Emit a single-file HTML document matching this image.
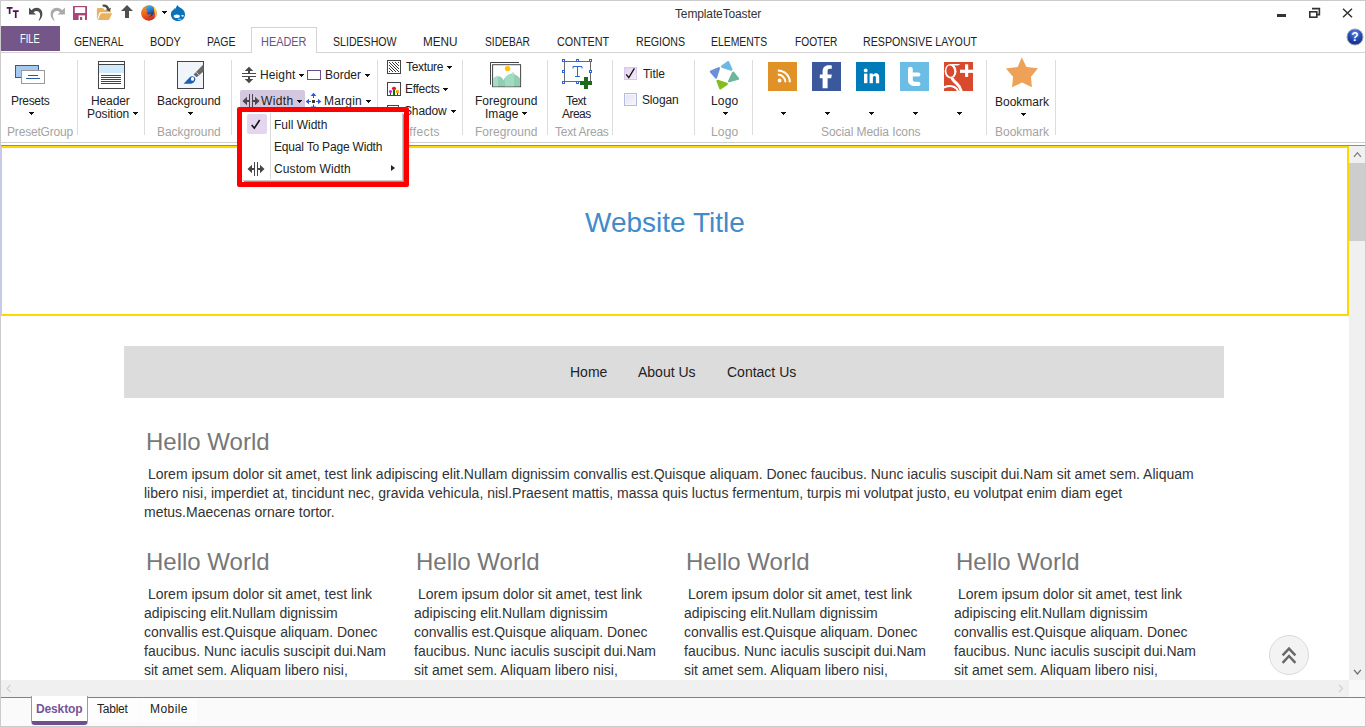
<!DOCTYPE html>
<html><head><meta charset="utf-8">
<style>
*{margin:0;padding:0;box-sizing:border-box}
html,body{width:1366px;height:727px;overflow:hidden;background:#fff}
body{font-family:"Liberation Sans",sans-serif;position:relative}
.a{position:absolute}
.t{position:absolute;height:20px;line-height:20px;white-space:nowrap;font-size:12px}
.sep{position:absolute;top:60px;height:75px;width:1px;background:#dcdcdc}
.arr{position:absolute;width:5px;height:3px;background:#111;clip-path:polygon(0 0,5px 0,5px 1px,4px 1px,4px 2px,3px 2px,3px 3px,2px 3px,2px 2px,1px 2px,1px 1px,0 1px)}
.c{font-size:14px;line-height:19px;color:#333;position:absolute}
.h{position:absolute;font-size:24px;line-height:28px;color:#777}
</style></head><body>
<!-- window frame -->
<div class="a" style="left:0;top:0;width:1366px;height:727px;border:1px solid #cbcbcb"></div>

<!-- tab strip -->
<div class="a" style="left:1px;top:52px;width:1364px;height:1px;background:#d4d4d4"></div>
<div class="a" style="left:1px;top:26px;width:59px;height:25px;background:#745788"></div>
<div class="a" style="left:251px;top:27px;width:66px;height:26px;background:#fff;border:1px solid #d4d4d4;border-bottom:none"></div>

<!-- ribbon bottom -->
<div class="a" style="left:1px;top:142px;width:1364px;height:1px;background:#d0d0d0"></div>

<!-- group separators -->
<div class="sep" style="left:77px"></div>
<div class="sep" style="left:144px"></div>
<div class="sep" style="left:231px"></div>
<div class="sep" style="left:377px"></div>
<div class="sep" style="left:462px"></div>
<div class="sep" style="left:547px"></div>
<div class="sep" style="left:612px"></div>
<div class="sep" style="left:694px"></div>
<div class="sep" style="left:752px"></div>
<div class="sep" style="left:986px"></div>
<div class="sep" style="left:1055px"></div>

<!-- width button highlight -->
<div class="a" style="left:240px;top:90px;width:65px;height:20px;background:#d5c7df;border-radius:2px"></div>

<!-- title bar icons -->
<svg class="a" style="left:6px;top:6px" width="14" height="14" viewBox="0 0 14 14"><g fill="#52124e"><path d="M0.7 1.1h5.9v1.7H4.5v5.2H2.8V2.8H0.7z"/><path d="M6.8 4.2h5.9v1.7h-2.1v6h-1.7v-6H6.8z"/></g></svg>
<svg class="a" style="left:28px;top:5px" width="16" height="17" viewBox="0 0 16 17"><path d="M1 2.6 L1 9.6 L8 9.6 L5.6 7.2 C7.6 5.3 10.6 5.6 11.7 8 C12.6 10 12.2 12.6 10.6 15.6 L11.6 15.6 C14.4 12.6 15.2 8.6 13.6 5.6 C11.6 2.2 7 1.6 3.6 5.2 Z" fill="#4d4d4d"/></svg>
<svg class="a" style="left:50px;top:5px" width="16" height="17" viewBox="0 0 16 17"><path transform="translate(16,0) scale(-1.070,1)" d="M1 2.6 L1 9.6 L8 9.6 L5.6 7.2 C7.6 5.3 10.6 5.6 11.7 8 C12.6 10 12.2 12.6 10.6 15.6 L11.6 15.6 C14.4 12.6 15.2 8.6 13.6 5.6 C11.6 2.2 7 1.6 3.6 5.2 Z" fill="#ababab"/></svg>
<svg class="a" style="left:73px;top:6px" width="14" height="14" viewBox="0 0 14 14"><rect x="0" y="0" width="14" height="14" fill="#a8467c"/><rect x="1.8" y="1.2" width="10.4" height="5.8" fill="#fff"/><rect x="5.6" y="9.4" width="6.4" height="4.6" fill="#fff"/><rect x="7" y="11" width="2.2" height="3" fill="#a8467c"/></svg>
<svg class="a" style="left:96px;top:4px" width="18" height="17" viewBox="0 0 18 17"><path d="M0.900 15.400 V5.200 Q0.900 3.900 2.200 3.900 H6.400 Q7.100 3.900 7.500 4.600 L8.300 5.900 H13.800 Q15 5.900 15 7.100 V8.200 H4.600 Q3.500 8.200 3.100 9.300 L1.200 15.600 Z" fill="#ebb15f"/><path d="M5.700 9.200 H16.200 L13.400 15.200 Q13.100 15.900 12.300 15.900 H2 L4.500 10 Q4.800 9.200 5.700 9.200 Z" fill="#ebb15f"/><path d="M6.600 1.800 C9.400 1 11.400 2.600 12.300 5" fill="none" stroke="#4a4a4a" stroke-width="2.200"/><path d="M9.700 5.700 L15 3.800 L13.700 7.600 Z" fill="#4a4a4a"/></svg>
<svg class="a" style="left:121px;top:5px" width="12" height="14" viewBox="0 0 12 14"><path d="M6 0 L12 6 H8 V13 H4 V6 H0 Z" fill="#505050"/></svg>
<svg class="a" style="left:141px;top:5px" width="16" height="16" viewBox="0 0 16 16"><defs><linearGradient id="ffg" x1="0.3" y1="0" x2="0.6" y2="1"><stop offset="0" stop-color="#3cc0f0"/><stop offset="0.5" stop-color="#1f78d0"/><stop offset="1" stop-color="#14246e"/></linearGradient><linearGradient id="ffo" x1="0.2" y1="0" x2="0.5" y2="1"><stop offset="0" stop-color="#f7921e"/><stop offset="0.55" stop-color="#ee5d1a"/><stop offset="1" stop-color="#cf2a1c"/></linearGradient><linearGradient id="ffy" x1="0" y1="0" x2="0" y2="1"><stop offset="0" stop-color="#fde64a"/><stop offset="0.6" stop-color="#fbc21e"/><stop offset="1" stop-color="#f08a1c"/></linearGradient></defs><circle cx="8" cy="7.900" r="7.700" fill="url(#ffo)"/><path d="M12.300 1.500 C14.600 3.200 15.900 6 15.600 8.800 C15.300 11 14.300 12.800 12.800 14 C13.800 12 14 9.600 13.600 7.400 C13.300 5.200 13 3.400 12.300 1.500 Z" fill="url(#ffy)"/><ellipse cx="8.500" cy="5.900" rx="4.600" ry="5.700" fill="url(#ffg)"/><path d="M0.500 6.200 C1.300 3.800 2.900 2.300 4.300 1.900 C3.700 2.900 4.500 3.300 5.700 3.200 C5 3.900 4.700 4.600 5.400 5.200 C6 5.500 6.800 5.400 7.200 5.600 C6.400 6.200 5.600 6.800 5.700 7.800 C5.800 9 7 9.700 8.300 9.600 C9.200 9.500 10 9.300 10.600 9 C10.300 10.500 8.800 11.600 7 11.400 C8.600 12.600 11 12.300 12.400 10.600 C13.300 9.500 13.500 8 13.400 6.600 C14.400 8.600 14.200 11.600 12 13.800 C9.400 16.200 5.200 16.200 2.600 13.600 C0.600 11.600 0 8.800 0.500 6.200 Z" fill="url(#ffo)"/></svg>
<svg class="a" style="left:170px;top:4px" width="16" height="18" viewBox="0 0 16 18"><path d="M7.400 0.900 C8.400 2.600 9.800 3.400 11.600 4.600 C13.800 6.100 15 8 15 10.600 C15 14.400 12 17.100 8 17.100 C4 17.100 0.900 14.400 0.900 10.600 C0.900 8.600 1.600 7.200 2.400 6.300 L2.800 7.200 L3.200 5.300 L4 6 L4.600 4 L5.600 4.800 L6.200 3 Z" fill="#0a72ba"/><ellipse cx="6.800" cy="12.200" rx="3.100" ry="1.800" fill="#fff"/><path d="M11.400 11.300 C12.200 10.800 13.400 10.900 14 11.800 C13.400 12.800 12.200 12.900 11.600 12.300 Z" fill="#fff"/><path d="M7.200 15.200 C8.800 14.300 10.400 14.400 11.800 15.400 C10.400 16.400 8.600 16.300 7.200 15.200 Z" fill="#7fc0e6"/></svg>

<!-- window controls -->
<div class="a" style="left:1277px;top:14px;width:9px;height:3px;background:#333"></div>
<svg class="a" style="left:1308px;top:7px" width="13" height="12" viewBox="0 0 13 12"><path d="M4 1.6 H11.4 V7.6 H9" fill="none" stroke="#333" stroke-width="1.6"/><rect x="1.8" y="4.8" width="7" height="5.4" fill="#fff" stroke="#333" stroke-width="1.6"/></svg>
<svg class="a" style="left:1341px;top:8px" width="13" height="10" viewBox="0 0 13 10"><path d="M2 0.8 L11 9.2 M11 0.8 L2 9.2" stroke="#333" stroke-width="1.5"/></svg>
<svg class="a" style="left:1346px;top:28px" width="18" height="18" viewBox="0 0 18 18"><defs><radialGradient id="hg" cx="0.5" cy="0.25" r="0.8"><stop offset="0" stop-color="#5f86e0"/><stop offset="0.5" stop-color="#2549b4"/><stop offset="1" stop-color="#14287a"/></radialGradient></defs><circle cx="9" cy="9" r="8" fill="url(#hg)" stroke="#9aa3b8" stroke-width="1"/><text x="9" y="13.2" text-anchor="middle" font-family="Liberation Sans" font-weight="700" font-size="12" fill="#fff">?</text></svg>

<!-- presets -->
<svg class="a" style="left:14px;top:64px" width="32" height="21" viewBox="0 0 32 21"><rect x="1.5" y="1.5" width="23" height="12" fill="#a7c9ee" stroke="#2a5d9e" stroke-width="1"/><rect x="7.5" y="6.5" width="23" height="13" fill="#fff" stroke="#9a9a9a" stroke-width="1"/><rect x="14" y="11" width="10" height="1" fill="#2a5d9e"/><rect x="12" y="14" width="14" height="1" fill="#2a5d9e"/></svg>
<!-- header position -->
<svg class="a" style="left:97px;top:60px" width="29" height="30" viewBox="0 0 29 30"><rect x="1.5" y="1.5" width="26" height="27" fill="#fff" stroke="#444" stroke-width="1"/><rect x="2" y="5" width="25" height="8" fill="#cfe9fd"/><rect x="1.5" y="4" width="26" height="1" fill="#444"/><g fill="#444"><rect x="4" y="15" width="20" height="1"/><rect x="4" y="17" width="20" height="1"/><rect x="4" y="19" width="20" height="1"/><rect x="4" y="21" width="20" height="1"/><rect x="4" y="23" width="20" height="1"/></g></svg>
<!-- background -->
<svg class="a" style="left:176px;top:60px" width="29" height="30" viewBox="0 0 29 30"><rect x="1.500" y="1.500" width="26" height="27" fill="#eff5fb" stroke="#444" stroke-width="1"/><path d="M27.500 4.300 V11.600 L20.600 17.200 L17.600 14.500 Z" fill="#6a6a6a"/><path d="M20.300 12.200 L22.800 14.800" stroke="#d8dde2" stroke-width="0.900"/><path d="M7.600 23.800 L14 16.900 C15.500 15.300 19.500 16.300 19.300 19.300 C19.100 21.700 17.400 23.300 14.800 23.700 Z" fill="#1f5fb0"/><ellipse cx="16.500" cy="18.900" rx="1.600" ry="1.900" fill="#fff"/></svg>

<!-- height icon -->
<svg class="a" style="left:241px;top:66px" width="16" height="18" viewBox="0 0 16 18"><g fill="#484848"><rect x="1" y="7" width="14" height="1"/><rect x="1" y="10" width="14" height="1"/><path d="M8 0.700 L12.300 5 H9 V7 H7 V5 H3.700 Z"/><path d="M8 17.300 L12.300 13 H9 V11 H7 V13 H3.700 Z"/></g></svg>
<!-- border icon -->
<div class="a" style="left:307px;top:70px;width:14px;height:10px;border:1px solid #6b4e8e;background:#fff"></div>
<!-- width icon -->
<svg class="a" style="left:242px;top:94px" width="18" height="14" viewBox="0 0 18 14"><g fill="#484848"><rect x="7" y="0" width="1" height="14"/><rect x="10" y="0" width="1" height="14"/><path d="M0.500 7 L5 2.800 V6 H7 V8 H5 V11.200 Z"/><path d="M17.500 7 L13 2.800 V6 H11 V8 H13 V11.200 Z"/></g></svg>
<!-- margin icon -->
<svg class="a" style="left:305px;top:92px" width="17" height="17" viewBox="0 0 17 17"><g fill="#2558d8"><path d="M8.500 0.700 L11.300 4 H9 V6 H8 V4 H5.700 Z"/><path d="M8.500 17.800 L11.300 14.500 H9 V12.500 H8 V14.500 H5.700 Z"/><path d="M0.700 9.500 L4 6.700 V9 H6 V10 H4 V12.300 Z"/><path d="M16.300 9.500 L13 6.700 V9 H11 V10 H13 V12.300 Z"/></g><rect x="7" y="8" width="3" height="3" fill="#3a3a3a"/></svg>

<!-- texture -->
<svg class="a" style="left:387px;top:60px" width="14" height="14" viewBox="0 0 14 14" shape-rendering="crispEdges"><defs><pattern id="hp" width="3" height="3" patternUnits="userSpaceOnUse"><rect x="0" y="0" width="1" height="1" fill="#333"/><rect x="1" y="1" width="1" height="1" fill="#333"/><rect x="2" y="2" width="1" height="1" fill="#333"/></pattern></defs><rect x="0.500" y="0.500" width="13" height="13" fill="#fff" stroke="#444"/><rect x="2" y="2" width="10" height="10" fill="url(#hp)"/></svg>
<!-- effects -->
<svg class="a" style="left:387px;top:82px" width="14" height="14" viewBox="0 0 14 14"><rect x="0.500" y="0.500" width="13" height="13" fill="#fff" stroke="#444"/><rect x="3" y="11" width="1" height="2.500" fill="#0f6b0f"/><rect x="6" y="8" width="2" height="5.500" fill="#0f6b0f"/><rect x="10" y="11" width="1" height="2.500" fill="#0f6b0f"/><circle cx="3.500" cy="9.500" r="1.600" fill="#d219e6"/><ellipse cx="7" cy="6.400" rx="2.100" ry="1.600" fill="#f01414"/><rect x="9" y="8" width="3" height="3" rx="0.600" fill="#fba01b"/></svg>
<!-- shadow -->
<svg class="a" style="left:387px;top:105px" width="14" height="14" viewBox="0 0 14 14"><rect x="0.500" y="0.500" width="11" height="11" fill="#fff" stroke="#444"/></svg>

<!-- foreground image -->
<svg class="a" style="left:489px;top:61px" width="33" height="27" viewBox="0 0 33 27"><path d="M1.500 23.700 V1.500 H30" fill="none" stroke="#444" stroke-width="1"/><rect x="3.600" y="3.700" width="28" height="22" fill="#fff" stroke="#444" stroke-width="1"/><path d="M4.100 25.200 V18 C5.600 15.600 8.600 14.600 11 15.600 C12.600 16.400 13.600 17.600 14.600 19 C16 16.600 18.600 13.400 21.600 13 C25.600 12.600 29 14.600 31.100 17.600 V25.200 Z" fill="#8fd0b4"/><path d="M9 15.200 V25.200 H4.100 V18 C5.400 16.200 7 15.400 9 15.200 Z" fill="#a6dcc4"/><path d="M20 13.400 L25 13.400 V25.200 H16 V17.600 Z" fill="#a3dac2"/><path d="M6.600 15.800 L8.600 14.400 L11 15.600 Z M21.600 13 L24 10.800 L26.600 13.600 Z" fill="#d8d8d8"/><circle cx="18.600" cy="7.600" r="2.700" fill="#ffc20e"/></svg>

<!-- text areas -->
<svg class="a" style="left:561px;top:58px" width="32" height="32" viewBox="0 0 32 32"><rect x="3.500" y="3.500" width="26" height="20" fill="#fff" stroke="#6a6a6a" stroke-width="1"/><g fill="#fff" stroke="#2b63da" stroke-width="1"><rect x="1.500" y="1.500" width="2" height="2"/><rect x="15.500" y="1.500" width="2" height="2"/><rect x="28.500" y="1.500" width="2" height="2"/><rect x="1.500" y="12.500" width="2" height="2"/><rect x="28.500" y="12.500" width="2" height="2"/><rect x="1.500" y="23.500" width="2" height="2"/><rect x="15.500" y="23.500" width="2" height="2"/></g><path d="M12 10.500 V8.500 H21 V10.500 M16.500 8.500 V18.500 M14 18.500 H19" fill="none" stroke="#2b63da" stroke-width="1"/><path d="M23 19 H27 V23 H31 V27 H27 V31 H23 V27 H19 V23 H23 Z" fill="#1b6b1b"/></svg>

<!-- checkboxes -->
<div class="a" style="left:624px;top:67px;width:13px;height:13px;background:linear-gradient(135deg,#e2d2ef,#f3ecf8);border:1px solid #dac8ec"></div>
<svg class="a" style="left:624px;top:67px" width="13" height="13" viewBox="0 0 13 13"><path d="M2.200 7.300 L4.800 10.600 L10.400 1.300" fill="none" stroke="#111" stroke-width="1.300"/></svg>
<div class="a" style="left:624px;top:93px;width:13px;height:13px;background:linear-gradient(135deg,#e3e3f3,#f6f6fc);border:1px solid #b3bbe3;box-shadow:inset 0 0 0 1px #f4f4fb"></div>

<!-- logo -->
<svg class="a" style="left:708px;top:60px" width="33" height="31" viewBox="0 0 33 31" stroke-linejoin="round" stroke-width="2.400"><path d="M14.200 6.500 L20.100 2.200 L23.300 9.600 Z" fill="#6ab8e3" stroke="#6ab8e3"/><path d="M3 11.600 L10.800 8.300 L8 17.400 Z" fill="#6b90d8" stroke="#6b90d8"/><path d="M25.200 12.800 L30 18.700 L21.200 21.200 Z" fill="#6db69b" stroke="#6db69b"/><path d="M9.600 21 L18.700 23.900 L12.400 28.200 Z" fill="#84bd1f" stroke="#84bd1f"/></svg>

<!-- social -->
<svg class="a" style="left:768px;top:62px" width="29" height="29" viewBox="0 0 29 29"><rect width="29" height="29" fill="#e09128"/><circle cx="11.600" cy="18.500" r="1.900" fill="#fff"/><path d="M9.800 12.600 C13.800 12.600 17.400 15.800 17.400 20.200" fill="none" stroke="#fff" stroke-width="2"/><path d="M9.800 8.400 C16.400 8.400 21.800 13.600 21.800 20.200" fill="none" stroke="#fff" stroke-width="2"/></svg>
<svg class="a" style="left:812px;top:62px" width="29" height="29" viewBox="0 0 29 29"><rect width="29" height="29" fill="#3b589d"/><path d="M10.600 26.200 V16.200 H7.800 V12.600 H10.600 V9.600 C10.600 5.600 12.800 3.200 16.800 3.200 C18.200 3.200 19.400 3.300 19.800 3.400 V6.800 H17.800 C16 6.800 15.600 7.600 15.600 9 V12.600 H19.800 L19.200 16.200 H15.600 V26.200 Z" fill="#fff"/></svg>
<svg class="a" style="left:856px;top:62px" width="29" height="29" viewBox="0 0 29 29"><rect width="29" height="29" fill="#007bba"/><circle cx="9.700" cy="8.400" r="1.900" fill="#fff"/><rect x="8" y="11.600" width="3.400" height="9.600" fill="#fff"/><path d="M13.600 11.600 H16.800 V13 C17.600 11.800 18.800 11.300 20 11.300 C22.400 11.300 23.200 13 23.200 15 V21.200 H19.900 V15.600 C19.900 14.600 19.400 14 18.500 14 C17.500 14 16.900 14.700 16.900 15.800 V21.200 H13.600 Z" fill="#fff"/></svg>
<svg class="a" style="left:900px;top:62px" width="29" height="29" viewBox="0 0 29 29"><rect width="29" height="29" fill="#6bbde5"/><path d="M8 7.200 C8 5.800 9 4.800 10.400 4.800 C11.800 4.800 12.800 5.800 12.800 7.200 V10.400 H18.200 C19.600 10.400 20.400 11.300 20.400 12.500 C20.400 13.700 19.600 14.600 18.200 14.600 H12.800 V17.200 C12.800 19 13.800 19.800 15.400 19.800 H18.200 C19.600 19.800 20.400 20.700 20.400 21.900 C20.400 23.100 19.600 24 18.200 24 H14.400 C10.400 24 8 21.600 8 18 Z" fill="#fff"/></svg>
<svg class="a" style="left:944px;top:62px" width="29" height="29" viewBox="0 0 29 29"><rect width="29" height="29" fill="#d9492e"/><rect x="21" y="2.300" width="3.200" height="12.600" fill="#fff"/><rect x="16" y="7.700" width="13" height="3.200" fill="#fff"/><ellipse cx="6.600" cy="9.200" rx="5.900" ry="7.300" fill="#fff"/><path d="M7 1.900 H16.400 L13.800 3.600 H9.500 Z" fill="#fff"/><ellipse cx="6.300" cy="9.200" rx="3.900" ry="5.700" fill="#d9492e" transform="rotate(-8 6.300 9.200)"/><path d="M8.200 15.800 C8.200 18.200 10.500 19.600 12.800 21.600 C15.200 23.800 16.600 26.300 17.300 29.500" fill="none" stroke="#fff" stroke-width="3"/><path d="M-0.500 25.600 C3 23.700 7.200 23.500 10.200 25 C12.200 26 13.600 27.600 14.200 29.500" fill="none" stroke="#fff" stroke-width="2"/></svg>

<!-- bookmark star -->
<svg class="a" style="left:1005px;top:56px" width="34" height="33" viewBox="0 0 34 33"><path d="M16.800 1.200 L21.400 10.900 L33 12.300 L26 20.800 L26.900 31.300 L17.100 26.500 L7 31.300 L8.100 20.800 L0.900 12.500 L12.700 10.900 Z" fill="#f0a158"/></svg>

<!-- dropdown arrows -->
<div class="arr" style="left:162px;top:11px"></div>
<div class="arr" style="left:29px;top:112px"></div>
<div class="arr" style="left:133px;top:112px"></div>
<div class="arr" style="left:188px;top:112px"></div>
<div class="arr" style="left:299px;top:74px"></div>
<div class="arr" style="left:365px;top:74px"></div>
<div class="arr" style="left:297px;top:100px"></div>
<div class="arr" style="left:366px;top:100px"></div>
<div class="arr" style="left:447px;top:66px"></div>
<div class="arr" style="left:443px;top:88px"></div>
<div class="arr" style="left:451px;top:110px"></div>
<div class="arr" style="left:522px;top:112px"></div>
<div class="arr" style="left:723px;top:112px"></div>
<div class="arr" style="left:781px;top:112px"></div>
<div class="arr" style="left:825px;top:112px"></div>
<div class="arr" style="left:869px;top:112px"></div>
<div class="arr" style="left:913px;top:112px"></div>
<div class="arr" style="left:957px;top:112px"></div>
<div class="arr" style="left:1021px;top:113px"></div>


<!-- page content -->
<div class="a" style="left:1px;top:145px;width:1364px;height:1px;background:#8a8aa2"></div>
<div class="a" style="left:0;top:145px;width:1px;height:171px;background:#c8cce8;z-index:5"></div>
<div class="a" style="left:0;top:146px;width:1349px;height:170px;border:2px solid #ffd800"></div>
<div class="a" style="left:585px;top:207px;width:160px;font-size:28px;line-height:32px;color:#428bca;white-space:nowrap">Website Title</div>
<div class="a" style="left:124px;top:346px;width:1100px;height:52px;background:#dcdcdc"></div>
<div class="c" style="left:570px;top:363px;color:#222">Home</div>
<div class="c" style="left:638px;top:363px;color:#222">About Us</div>
<div class="c" style="left:727px;top:363px;color:#222">Contact Us</div>

<div class="h" style="left:146px;top:428px">Hello World</div>
<div class="c" style="left:144px;top:465px;width:1080px">&nbsp;Lorem ipsum dolor sit amet, test link adipiscing elit.Nullam dignissim convallis est.Quisque aliquam. Donec faucibus. Nunc iaculis suscipit dui.Nam sit amet sem. Aliquam libero nisi, imperdiet at, tincidunt nec, gravida vehicula, nisl.Praesent mattis, massa quis luctus fermentum, turpis mi volutpat justo, eu volutpat enim diam eget metus.Maecenas ornare tortor.</div>

<div class="h" style="left:146px;top:548px">Hello World</div>
<div class="c" style="left:144px;top:585px;width:250px;height:95px;overflow:hidden">&nbsp;Lorem ipsum dolor sit amet, test link adipiscing elit.Nullam dignissim convallis est.Quisque aliquam. Donec faucibus. Nunc iaculis suscipit dui.Nam sit amet sem. Aliquam libero nisi, imperdiet at, tincidunt nec, gravida vehicula, nisl.</div>
<div class="h" style="left:416px;top:548px">Hello World</div>
<div class="c" style="left:414px;top:585px;width:250px;height:95px;overflow:hidden">&nbsp;Lorem ipsum dolor sit amet, test link adipiscing elit.Nullam dignissim convallis est.Quisque aliquam. Donec faucibus. Nunc iaculis suscipit dui.Nam sit amet sem. Aliquam libero nisi, imperdiet at, tincidunt nec, gravida vehicula, nisl.</div>
<div class="h" style="left:686px;top:548px">Hello World</div>
<div class="c" style="left:684px;top:585px;width:250px;height:95px;overflow:hidden">&nbsp;Lorem ipsum dolor sit amet, test link adipiscing elit.Nullam dignissim convallis est.Quisque aliquam. Donec faucibus. Nunc iaculis suscipit dui.Nam sit amet sem. Aliquam libero nisi, imperdiet at, tincidunt nec, gravida vehicula, nisl.</div>
<div class="h" style="left:956px;top:548px">Hello World</div>
<div class="c" style="left:954px;top:585px;width:250px;height:95px;overflow:hidden">&nbsp;Lorem ipsum dolor sit amet, test link adipiscing elit.Nullam dignissim convallis est.Quisque aliquam. Donec faucibus. Nunc iaculis suscipit dui.Nam sit amet sem. Aliquam libero nisi, imperdiet at, tincidunt nec, gravida vehicula, nisl.</div>

<!-- scrollbars -->
<div class="a" style="left:1349px;top:146px;width:16px;height:534px;background:#f0f0f0"></div>
<div class="a" style="left:1349px;top:163px;width:16px;height:78px;background:#cdcdcd"></div>
<div class="a" style="left:1px;top:680px;width:1348px;height:17px;background:#f0f0f0"></div>
<div class="a" style="left:1349px;top:680px;width:16px;height:17px;background:#f8f8f8"></div>
<svg class="a" style="left:1349px;top:146px" width="16" height="17" viewBox="0 0 16 17"><path d="M5 10.800 L8.450 6.700 L11.900 10.800" fill="none" stroke="#7d7d7d" stroke-width="1.300"/></svg>
<svg class="a" style="left:1349px;top:663px" width="16" height="17" viewBox="0 0 16 17"><path d="M5 6.800 L8.450 10.900 L11.900 6.800" fill="none" stroke="#6e6e6e" stroke-width="1.300"/></svg>
<svg class="a" style="left:1px;top:680px" width="17" height="17" viewBox="0 0 17 17"><path d="M9.5 5 L6 8.5 L9.5 12" fill="none" stroke="#d0d0d0" stroke-width="1.1"/></svg>
<svg class="a" style="left:1332px;top:680px" width="17" height="17" viewBox="0 0 17 17"><path d="M7 5 L10.5 8.5 L7 12" fill="none" stroke="#d0d0d0" stroke-width="1.1"/></svg>

<!-- back to top -->
<div class="a" style="left:1269px;top:635px;width:40px;height:40px;border-radius:50%;background:#f3f3f3;border:1px solid #dadada"></div>
<svg class="a" style="left:1279px;top:645px" width="20" height="22" viewBox="0 0 20 22"><path d="M3.600 10.400 L10 3.600 L16.400 10.400 M3.600 17.800 L10 11 L16.400 17.800" fill="none" stroke="#696969" stroke-width="2.500"/></svg>

<!-- bottom bar -->
<div class="a" style="left:1px;top:697px;width:1364px;height:29px;background:#fafafa;border-top:1px solid #828282"></div>
<div class="a" style="left:88px;top:698px;width:51px;height:24px;background:#fdfdfd"></div><div class="a" style="left:140px;top:698px;width:57px;height:24px;background:#fdfdfd"></div>
<div class="a" style="left:31px;top:696px;width:57px;height:29px;background:#fff;border:1px solid #a591b8;border-top:none;border-bottom:4px solid #6f4f8c;border-radius:0 0 4px 4px"></div>

<div class="t" style="left:675px;top:4px;color:#333;letter-spacing:-0.13px">TemplateToaster</div>
<div class="t" style="left:20.1px;top:29px;color:#ffffff;transform:scaleX(0.779);transform-origin:0 0">FILE</div>
<div class="t" style="left:74px;top:32px;color:#222222;transform:scaleX(0.863);transform-origin:0 0">GENERAL</div>
<div class="t" style="left:150px;top:32px;color:#222222;transform:scaleX(0.908);transform-origin:0 0">BODY</div>
<div class="t" style="left:207px;top:32px;color:#222222;transform:scaleX(0.877);transform-origin:0 0">PAGE</div>
<div class="t" style="left:261px;top:32px;color:#6b5283;transform:scaleX(0.910);transform-origin:0 0">HEADER</div>
<div class="t" style="left:333px;top:32px;color:#222222;transform:scaleX(0.882);transform-origin:0 0">SLIDESHOW</div>
<div class="t" style="left:423.4px;top:32px;color:#222222;transform:scaleX(0.977);transform-origin:0 0">MENU</div>
<div class="t" style="left:484.8px;top:32px;color:#222222;transform:scaleX(0.854);transform-origin:0 0">SIDEBAR</div>
<div class="t" style="left:556.7px;top:32px;color:#222222;transform:scaleX(0.898);transform-origin:0 0">CONTENT</div>
<div class="t" style="left:636px;top:32px;color:#222222;transform:scaleX(0.887);transform-origin:0 0">REGIONS</div>
<div class="t" style="left:711px;top:32px;color:#222222;transform:scaleX(0.867);transform-origin:0 0">ELEMENTS</div>
<div class="t" style="left:794.7px;top:32px;color:#222222;transform:scaleX(0.848);transform-origin:0 0">FOOTER</div>
<div class="t" style="left:863px;top:32px;color:#222222;transform:scaleX(0.888);transform-origin:0 0">RESPONSIVE LAYOUT</div>
<div class="t" style="left:11px;top:91px;color:#222222;letter-spacing:-0.34px">Presets</div>
<div class="t" style="left:7px;top:122px;color:#a3a3a3;letter-spacing:-0.18px">PresetGroup</div>
<div class="t" style="left:91px;top:91px;color:#222222;letter-spacing:-0.11px">Header</div>
<div class="t" style="left:87px;top:104px;color:#222222;letter-spacing:-0.06px">Position</div>
<div class="t" style="left:157px;top:91px;color:#222222;letter-spacing:-0.04px">Background</div>
<div class="t" style="left:157px;top:122px;color:#a3a3a3;letter-spacing:-0.04px">Background</div>
<div class="t" style="left:260px;top:65px;color:#222222;letter-spacing:0.12px">Height</div>
<div class="t" style="left:325px;top:65px;color:#222222;letter-spacing:-0.01px">Border</div>
<div class="t" style="left:261px;top:91px;color:#222222;letter-spacing:0.36px">Width</div>
<div class="t" style="left:324px;top:91px;color:#222222;letter-spacing:0.21px">Margin</div>
<div class="t" style="left:406px;top:57px;color:#222222;letter-spacing:-0.34px">Texture</div>
<div class="t" style="left:405px;top:79px;color:#222222;letter-spacing:-0.28px">Effects</div>
<div class="t" style="left:404px;top:101px;color:#222222;letter-spacing:-0.15px">Shadow</div>
<div class="t" style="left:401px;top:122px;color:#a3a3a3;letter-spacing:0.35px">Effects</div>
<div class="t" style="left:475px;top:91px;color:#222222;letter-spacing:0.03px">Foreground</div>
<div class="t" style="left:485px;top:104px;color:#222222;letter-spacing:0.03px">Image</div>
<div class="t" style="left:475px;top:122px;color:#a3a3a3;letter-spacing:0.03px">Foreground</div>
<div class="t" style="left:566px;top:91px;color:#222222;letter-spacing:-0.53px">Text</div>
<div class="t" style="left:562px;top:104px;color:#222222;letter-spacing:-0.55px">Areas</div>
<div class="t" style="left:555px;top:122px;color:#a3a3a3;letter-spacing:-0.24px">Text Areas</div>
<div class="t" style="left:643px;top:64px;color:#222222;letter-spacing:-0.05px">Title</div>
<div class="t" style="left:642px;top:90px;color:#222222;letter-spacing:-0.15px">Slogan</div>
<div class="t" style="left:711px;top:91px;color:#222222;letter-spacing:0.20px">Logo</div>
<div class="t" style="left:711px;top:122px;color:#a3a3a3;letter-spacing:0.20px">Logo</div>
<div class="t" style="left:821px;top:122px;color:#a3a3a3;letter-spacing:-0.07px">Social Media Icons</div>
<div class="t" style="left:995px;top:92px;color:#222222;letter-spacing:-0.00px">Bookmark</div>
<div class="t" style="left:995px;top:122px;color:#a3a3a3;letter-spacing:-0.00px">Bookmark</div>
<div class="t" style="left:36px;top:699px;color:#75559a;font-weight:700;letter-spacing:-0.13px">Desktop</div>
<div class="t" style="left:97px;top:699px;color:#222222;letter-spacing:-0.23px">Tablet</div>
<div class="t" style="left:150px;top:699px;color:#222222;letter-spacing:0.43px">Mobile</div>

<!-- popup -->
<div class="a" style="left:242px;top:112px;width:160px;height:68px;background:#fff;box-shadow:1px 1px 0 0 #c4cccc,2px 2px 0 0 #8c9898"></div>
<div class="a" style="left:270px;top:113px;width:1px;height:66px;background:#dadada"></div>
<div class="a" style="left:247px;top:114px;width:20px;height:20px;background:#e4d6ee;border-radius:2px"></div>
<svg class="a" style="left:247px;top:114px" width="20" height="20" viewBox="0 0 20 20"><path d="M4.700 11 L7.300 14.200 L12.700 6" fill="none" stroke="#111" stroke-width="1.600"/></svg>
<svg class="a" style="left:247px;top:162px" width="18" height="14" viewBox="0 0 18 14"><g fill="#484848"><rect x="7" y="0" width="1" height="14"/><rect x="10" y="0" width="1" height="14"/><path d="M0.500 7 L5 2.800 V6 H7 V8 H5 V11.200 Z"/><path d="M17.500 7 L13 2.800 V6 H11 V8 H13 V11.200 Z"/></g></svg>
<div class="a" style="left:391px;top:165px;width:0;height:0;border-top:3.5px solid transparent;border-bottom:3.5px solid transparent;border-left:4.5px solid #222"></div>
<div class="a" style="left:237px;top:107px;width:172px;height:80px;border:5px solid #ff0000;border-radius:2px"></div>
<div class="t" style="left:274px;top:115px;color:#222222;letter-spacing:-0.00px">Full Width</div>
<div class="t" style="left:274px;top:137px;color:#222222;letter-spacing:-0.19px">Equal To Page Width</div>
<div class="t" style="left:274px;top:159px;color:#222222;letter-spacing:0.11px">Custom Width</div>
</body></html>
